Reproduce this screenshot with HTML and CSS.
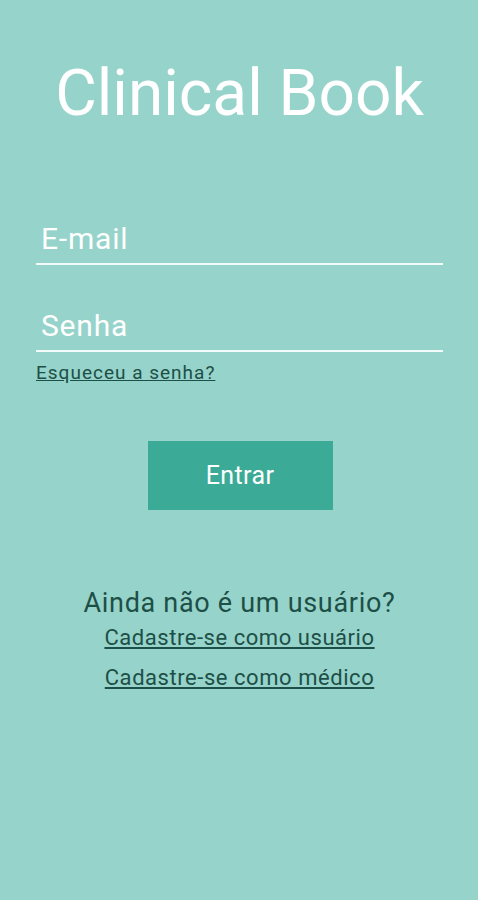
FILE: index.html
```html
<!DOCTYPE html>
<html lang="pt">
<head>
<meta charset="utf-8">
<title>Clinical Book</title>
<link rel="stylesheet" href="styles.css">
</head>
<body>
<main class="screen">
  <h1 class="title">Clinical Book</h1>
  <form class="form">
    <div class="field"><span class="placeholder">E-mail</span></div>
    <div class="field field-second"><span class="placeholder">Senha</span></div>
    <a class="forgot" href="#">Esqueceu a senha?</a>
    <div class="actions"><button type="button" class="btn">Entrar</button></div>
  </form>
  <section class="signup">
    <p class="question">Ainda não é um usuário?</p>
    <a class="link link-user" href="#">Cadastre-se como usuário</a>
    <a class="link link-doc" href="#">Cadastre-se como médico</a>
  </section>
</main>
</body>
</html>
```
FILE: styles.css
```css
html, body {
  margin: 0;
  padding: 0;
}
body {
  background: #96d3ca;
  font-family: Roboto, "Noto Sans", sans-serif;
  width: 478px;
  height: 900px;
  overflow: hidden;
}
.screen {
  display: flex;
  flex-direction: column;
  padding: 0 35px 0 36px;
}
.title {
  margin: 56px 0 0;
  font-size: 64px;
  line-height: 76px;
  font-weight: 400;
  color: #ffffff;
  text-align: center;
}
.form {
  display: flex;
  flex-direction: column;
  margin-top: 89px;
}
.field {
  border-bottom: 2px solid #f2fbf9;
  padding: 0 0 6px 5px;
}
.field-second {
  margin-top: 43px;
}
.placeholder {
  display: block;
  font-size: 30px;
  line-height: 36px;
  letter-spacing: 0.8px;
  color: #ffffff;
}
.forgot {
  align-self: flex-start;
  margin-top: 10px;
  font-size: 19px;
  line-height: 21px;
  letter-spacing: 1px;
  color: #1d4f47;
  text-decoration: underline;
}
.actions {
  display: flex;
  justify-content: center;
  margin-top: 58px;
}
.btn {
  width: 185px;
  height: 69px;
  border: none;
  background: #3bab98;
  color: #ffffff;
  font-family: Roboto, "Noto Sans", sans-serif;
  font-size: 25px;
  letter-spacing: 0.4px;
  padding: 0;
  margin-left: 1px;
}
.signup {
  display: flex;
  flex-direction: column;
  align-items: center;
  margin-top: 77px;
}
.question {
  margin: 0;
  font-size: 27px;
  line-height: 32px;
  letter-spacing: 0.7px;
  color: #1d4f47;
}
.link {
  font-size: 22px;
  line-height: 25px;
  letter-spacing: 0.55px;
  color: #1d4f47;
  text-decoration: underline;
}
.link-user {
  margin-top: 6px;
}
.link-doc {
  margin-top: 15px;
}
```
